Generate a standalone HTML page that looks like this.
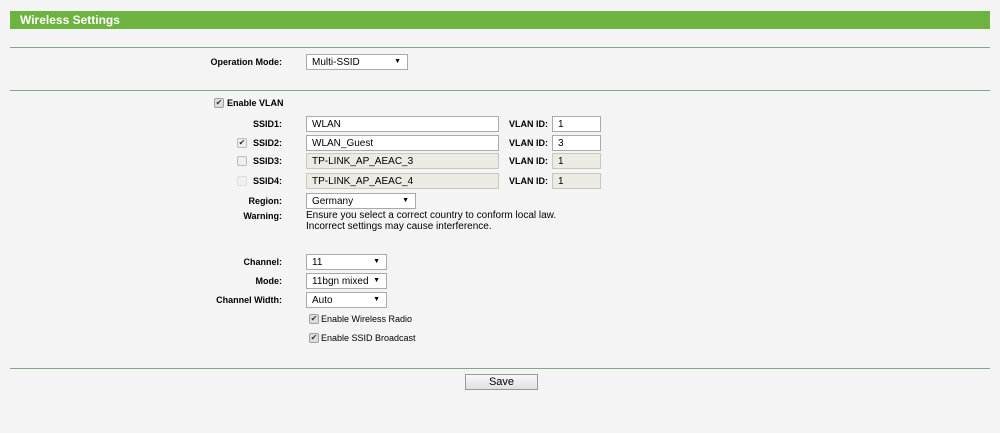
<!DOCTYPE html>
<html><head><style>
body{margin:0;width:1000px;height:433px;background:#f4f4f4;font-family:"Liberation Sans",Arial,sans-serif;font-size:11px;color:#000;position:relative;overflow:hidden}
.a{position:absolute;white-space:nowrap}
.hdr{left:10px;top:11px;width:980px;height:18px;background:#6db33f;color:#fff;font-weight:bold;font-size:12px;line-height:18px;padding-left:10px;box-sizing:border-box}
.ln{left:10px;width:980px;height:1px;background:#7fa98a}
.lb{font-weight:bold;text-align:right;width:200px;left:82px;line-height:14px;font-size:9px}
.in{height:16px;border:1px solid #a9a9a9;background:#fff;box-sizing:border-box;padding-left:5px;line-height:16px;font-size:10px}
.dis{background:#ebebe4;border-color:#c8c8c0}
.sel::after{content:"▼";position:absolute;right:6px;top:0;font-size:7px;line-height:14px}
.cb{width:10px;height:10px;border:1px solid #a0a0a0;border-radius:2px;background:#ddd;box-sizing:border-box;font-size:8px;line-height:8px;text-align:center;color:#333}
.cbw{background:#eee;border-color:#bbb}
.cbd{background:#f0f0f0;border-color:#ddd}
.vl{font-weight:bold;left:509px;line-height:14px;font-size:9px}
</style></head><body>
<div class="a hdr">Wireless Settings</div>
<div class="a ln" style="top:47px"></div>
<div class="a lb" style="top:55px">Operation Mode:</div>
<div class="a in sel" style="left:306px;top:54px;width:102px">Multi-SSID</div>
<div class="a ln" style="top:90px"></div>
<div class="a cb" style="left:214px;top:98px">✔</div>
<div class="a" style="left:227px;top:96px;font-weight:bold;line-height:14px;font-size:9px">Enable VLAN</div>

<div class="a lb" style="top:117px">SSID1:</div>
<div class="a in" style="left:306px;top:116px;width:193px">WLAN</div>
<div class="a vl" style="top:117px">VLAN ID:</div>
<div class="a in" style="left:552px;top:116px;width:49px">1</div>

<div class="a cb cbw" style="left:237px;top:138px">✔</div>
<div class="a lb" style="top:136px">SSID2:</div>
<div class="a in" style="left:306px;top:135px;width:193px">WLAN_Guest</div>
<div class="a vl" style="top:136px">VLAN ID:</div>
<div class="a in" style="left:552px;top:135px;width:49px">3</div>

<div class="a cb cbw" style="left:237px;top:156px"></div>
<div class="a lb" style="top:154px">SSID3:</div>
<div class="a in dis" style="left:306px;top:153px;width:193px">TP-LINK_AP_AEAC_3</div>
<div class="a vl" style="top:154px">VLAN ID:</div>
<div class="a in dis" style="left:552px;top:153px;width:49px">1</div>

<div class="a cb cbd" style="left:237px;top:176px"></div>
<div class="a lb" style="top:174px">SSID4:</div>
<div class="a in dis" style="left:306px;top:173px;width:193px">TP-LINK_AP_AEAC_4</div>
<div class="a vl" style="top:174px">VLAN ID:</div>
<div class="a in dis" style="left:552px;top:173px;width:49px">1</div>

<div class="a lb" style="top:194px">Region:</div>
<div class="a in sel" style="left:306px;top:193px;width:110px">Germany</div>
<div class="a lb" style="top:209px">Warning:</div>
<div class="a" style="left:306px;top:210px;font-size:10px;line-height:11px">Ensure you select a correct country to conform local law.<br>Incorrect settings may cause interference.</div>

<div class="a lb" style="top:255px">Channel:</div>
<div class="a in sel" style="left:306px;top:254px;width:81px">11</div>
<div class="a lb" style="top:274px">Mode:</div>
<div class="a in sel" style="left:306px;top:273px;width:81px">11bgn mixed</div>
<div class="a lb" style="top:293px">Channel Width:</div>
<div class="a in sel" style="left:306px;top:292px;width:81px">Auto</div>
<div class="a cb" style="left:309px;top:314px">✔</div>
<div class="a" style="left:321px;top:312px;line-height:14px;font-size:9px">Enable Wireless Radio</div>
<div class="a cb" style="left:309px;top:333px">✔</div>
<div class="a" style="left:321px;top:331px;line-height:14px;font-size:9px">Enable SSID Broadcast</div>

<div class="a ln" style="top:368px"></div>
<div class="a" style="left:465px;top:374px;width:73px;height:16px;border:1px solid #999;box-sizing:border-box;background:linear-gradient(#f8f8f8,#e0e0e0);text-align:center;line-height:14px;font-size:11px">Save</div>
</body></html>
